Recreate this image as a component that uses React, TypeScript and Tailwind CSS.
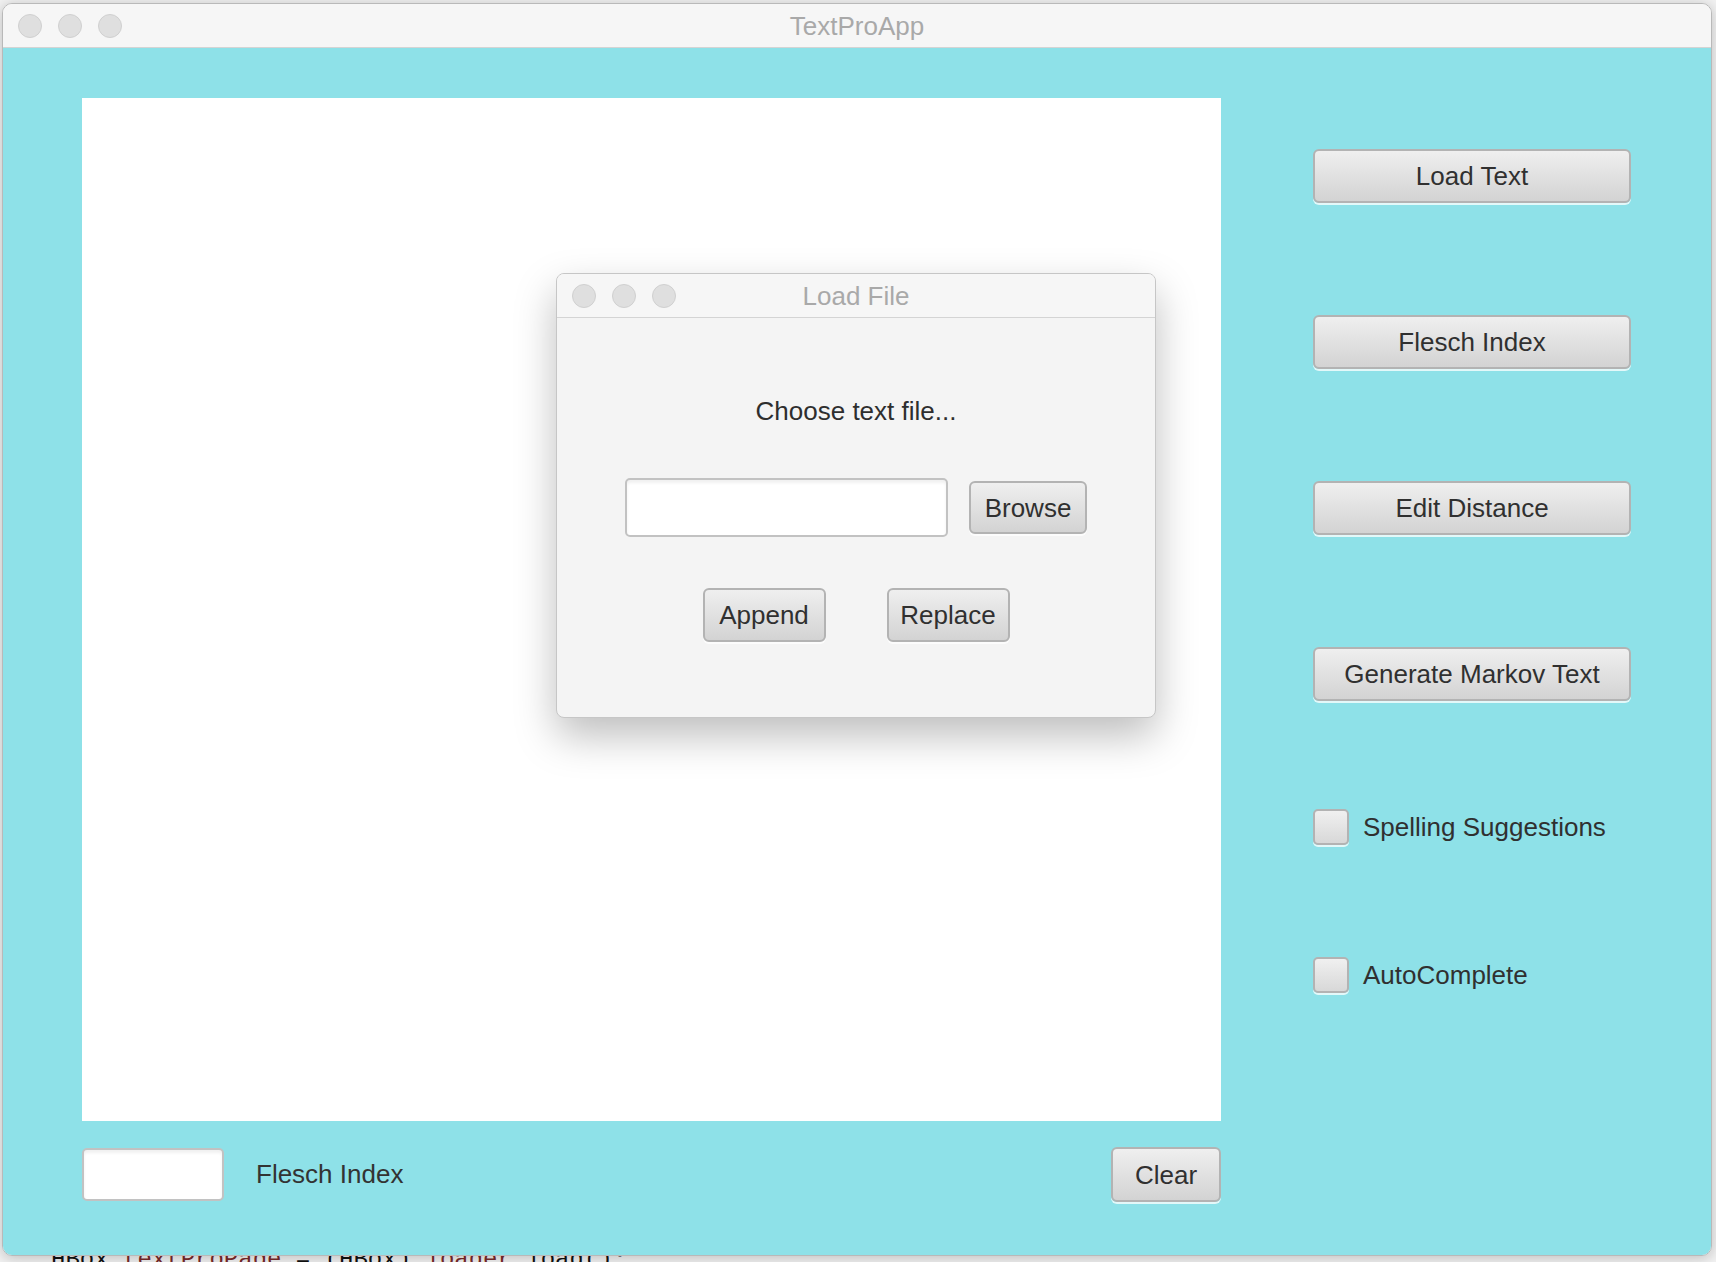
const SANS = { fontFamily: '"Liberation Sans", Arial, sans-serif' }
const MONO = { fontFamily: '"Liberation Mono", "Courier New", monospace' }

export default function App() {
  return (
    <div className="relative w-[1716px] h-[1262px] overflow-hidden bg-[#f2f2f2]" style={SANS}>
      {/* Main window */}
      <div className="relative z-10 ml-[2px] mt-[3px] w-[1710px] h-[1253px] rounded-[10px] border border-[#b9b9b9] overflow-hidden flex flex-col shadow-[0_2px_14px_rgba(0,0,0,0.22)]">
        <TitleBar title="TextProApp" />

        <div className="flex-1 flex bg-[#8ee1e8] pt-[50px] pl-[79px]">
          {/* Left column */}
          <div className="w-[1139px] flex flex-col">
            <div className="h-[1023px] bg-white" />
            <div className="mt-[26px] h-[55px] flex items-center">
              <TextField className="w-[142px] h-[53px]" />
              <span className="ml-[32px] text-[26px] text-[#333]">Flesch Index</span>
              <FxButton label="Clear" className="ml-auto w-[110px] h-[55px]" />
            </div>
          </div>

          {/* Right column */}
          <div className="ml-[92px] w-[318px] flex flex-col pt-[51px]">
            <FxButton label="Load Text" className="w-full h-[54px]" />
            <FxButton label="Flesch Index" className="mt-[112px] w-full h-[54px]" />
            <FxButton label="Edit Distance" className="mt-[112px] w-full h-[54px]" />
            <FxButton label="Generate Markov Text" className="mt-[112px] w-full h-[54px]" />
            <CheckRow label="Spelling Suggestions" className="mt-[108px]" />
            <CheckRow label="AutoComplete" className="mt-[112px]" />
          </div>
        </div>
      </div>

      {/* editor behind the window */}
      <div className="-mt-[10px] pl-[51px] text-[24px] leading-[28px] whitespace-pre text-[#111]" style={MONO}>
        HBox <span className="text-[#7a2a2a]">textProPage</span> = (HBox) <span className="text-[#7a2a2a]">loader</span>.load();
      </div>

      {/* Load File dialog */}
      <div className="absolute z-20 left-[556px] top-[273px] w-[600px] h-[445px] rounded-[8px] border border-[#c6c6c6] bg-[#f4f4f4] overflow-hidden flex flex-col shadow-[0_18px_42px_rgba(0,0,0,0.26)]">
        <TitleBar title="Load File" />
        <div className="flex flex-col items-center pt-[78px]">
          <div className="text-[26px] leading-[30px] text-[#2e2e2e]">Choose text file...</div>
          <div className="mt-[52px] flex items-center gap-[21px]">
            <TextField className="w-[323px] h-[59px]" />
            <FxButton label="Browse" className="w-[118px] h-[53px]" />
          </div>
          <div className="mt-[51px] flex items-center gap-[61px]">
            <FxButton label="Append" className="w-[123px] h-[54px]" />
            <FxButton label="Replace" className="w-[123px] h-[54px]" />
          </div>
        </div>
      </div>
    </div>
  )
}

function TitleBar({ title }: { title: string }) {
  return (
    <div className="h-[44px] shrink-0 grid grid-cols-[1fr_auto_1fr] items-center bg-[#f6f6f6] border-b border-[#d4d4d4] pl-[15px]">
      <div className="flex items-center gap-[16px]">
        <span className="w-[24px] h-[24px] rounded-full bg-[#dfdfdf] border border-[#d0d0d0]" />
        <span className="w-[24px] h-[24px] rounded-full bg-[#dfdfdf] border border-[#d0d0d0]" />
        <span className="w-[24px] h-[24px] rounded-full bg-[#dfdfdf] border border-[#d0d0d0]" />
      </div>
      <span className="text-[26px] leading-none text-[#a9a9a9] -ml-[15px]">{title}</span>
      <div />
    </div>
  )
}

function FxButton({ label, className = '' }: { label: string; className?: string }) {
  return (
    <div
      className={`flex items-center justify-center rounded-[6px] border-2 border-[#b3b3b3] bg-gradient-to-b from-[#efefef] to-[#d3d3d3] shadow-[0_2px_0_rgba(255,255,255,0.75)] text-[26px] leading-none text-[#303030] ${className}`}
    >
      {label}
    </div>
  )
}

function TextField({ className = '' }: { className?: string }) {
  return (
    <div
      className={`rounded-[5px] border-2 border-[#c2c2c2] bg-white shadow-[inset_0_3px_3px_rgba(0,0,0,0.06)] ${className}`}
    />
  )
}

function CheckRow({ label, className = '' }: { label: string; className?: string }) {
  return (
    <div className={`flex items-center gap-[14px] ${className}`}>
      <span className="w-[36px] h-[36px] rounded-[5px] border-2 border-[#b3b3b3] bg-gradient-to-b from-[#f0f0f0] to-[#d8d8d8] shadow-[0_2px_0_rgba(255,255,255,0.75)]" />
      <span className="text-[26px] leading-none text-[#303030]">{label}</span>
    </div>
  )
}
